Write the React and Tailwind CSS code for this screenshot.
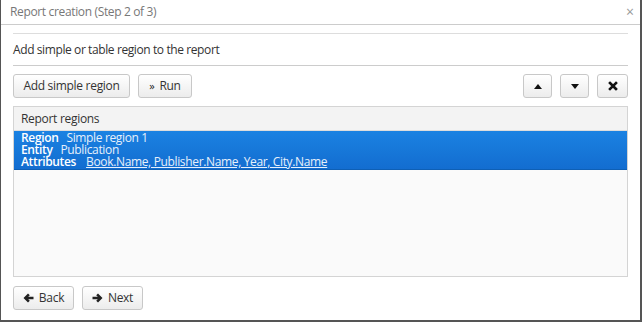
import React from 'react';

const Btn = ({ children, className = '' }) => (
    <button
        className={`h-[24px] border border-[#c8c8c8] rounded-[3px] bg-gradient-to-b from-white to-[#ececec] text-[#333] text-[12px] tracking-[-0.3px] flex items-center justify-center ${className}`}
    >
        {children}
    </button>
);

const Arrow = ({ dir }) => (
    <svg width="11" height="10" viewBox="0 0 11 10">
        {dir === 'left' ? (
            <path d="M0.5 5 L5 0.5 L6.8 2.3 L5.2 3.7 H10.5 V6.3 H5.2 L6.8 7.7 L5 9.5 Z" fill="#222" />
        ) : (
            <path d="M10.5 5 L6 0.5 L4.2 2.3 L5.8 3.7 H0.5 V6.3 H5.8 L4.2 7.7 L6 9.5 Z" fill="#222" />
        )}
    </svg>
);

export default function App() {
    return (
        <div
            className="w-[642px] h-[322px] bg-white border-l border-r-2 border-b-2 border-[#555] flex flex-col"
            style={{ fontFamily: '"Open Sans", sans-serif' }}
        >
            <div className="h-[25px] flex items-center justify-between pl-[9px] pr-[6px] border-b border-[#ccc] shrink-0">
                <span className="text-[12px] tracking-[-0.35px] text-[#777]">Report creation (Step 2 of 3)</span>
                <span className="text-[#999] text-[14px] leading-none">×</span>
            </div>
            <div className="flex-1 flex flex-col px-[12px]">
                <div className="mt-[8px] border-t border-[#ddd]"></div>
                <div className="h-[31px] flex items-center text-[12px] tracking-[-0.4px] text-[#333]">
                    Add simple or table region to the report
                </div>
                <div className="border-t border-[#ccc]"></div>
                <div className="mt-[8px] flex items-center">
                    <Btn className="w-[117px]">Add simple region</Btn>
                    <Btn className="w-[54px] ml-[8px] gap-[5px]">
                        <span className="text-[11px] text-[#222]">»</span>Run
                    </Btn>
                    <div className="flex-1"></div>
                    <Btn className="w-[29px]">
                        <svg width="8" height="5" viewBox="0 0 8 5"><path d="M0 5 L4 0 L8 5 Z" fill="#111" /></svg>
                    </Btn>
                    <Btn className="w-[29px] ml-[8px]">
                        <svg width="8" height="5" viewBox="0 0 8 5"><path d="M0 0 L4 5 L8 0 Z" fill="#111" /></svg>
                    </Btn>
                    <Btn className="w-[31px] ml-[8px]">
                        <svg width="10" height="10" viewBox="0 0 10 10"><path d="M2 2 L8 8 M8 2 L2 8" stroke="#111" strokeWidth="2.6" strokeLinecap="square" /></svg>
                    </Btn>
                </div>
                <div className="mt-[8px] h-[171px] border border-[#d4d4d4] bg-[#fafafa] flex flex-col">
                    <div className="h-[24px] flex items-center px-[7px] bg-[#f3f3f3] border-b border-[#ddd] text-[12px] tracking-[-0.3px] text-[#333]">
                        Report regions
                    </div>
                    <div className="h-[39px] bg-gradient-to-b from-[#1b82e2] to-[#136dd0] border-b border-[#0e5fb5] px-[7px] flex flex-col justify-center text-white text-[12px] tracking-[-0.35px] leading-[12px]">
                        <div><span className="font-semibold">Region</span><span className="ml-[8px] text-[#e6f0fb]">Simple region 1</span></div>
                        <div><span className="font-semibold">Entity</span><span className="ml-[8px] text-[#e6f0fb]">Publication</span></div>
                        <div><span className="font-semibold">Attributes</span><span className="ml-[10px] underline text-[#e6f0fb]">Book.Name, Publisher.Name, Year, City.Name</span></div>
                    </div>
                </div>
                <div className="mt-[9px] flex items-center">
                    <Btn className="w-[61px] gap-[5px]"><Arrow dir="left" />Back</Btn>
                    <Btn className="w-[61px] ml-[8px] gap-[5px]"><Arrow dir="right" />Next</Btn>
                </div>
            </div>
        </div>
    );
}
